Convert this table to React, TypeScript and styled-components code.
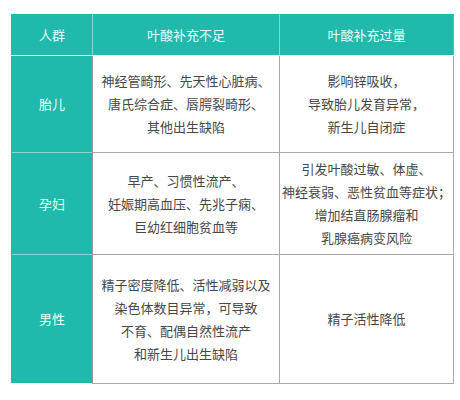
import React from 'react';
import styled, { createGlobalStyle } from 'styled-components';

const GlobalStyle = createGlobalStyle`
  body {
    margin: 0;
    background: #ffffff;
    font-family: 'Noto Sans CJK SC', 'Noto Sans', sans-serif;
  }
`;

const TEAL = '#1fbaac';

const Page = styled.div`
  padding: 14px 7px 0 11px;
`;

const Table = styled.table`
  width: 442px;
  table-layout: fixed;
  border-collapse: collapse;
  font-size: 13px;
  line-height: 23px;
`;

interface ColProps {
  w: number;
}
const Col = styled.col<ColProps>`
  width: ${({ w }) => w}px;
`;

interface RowProps {
  h: number;
}
const Row = styled.tr<RowProps>`
  height: ${({ h }) => h}px;
`;

const HeadCell = styled.th`
  background: ${TEAL};
  color: #eafffb;
  font-weight: 400;
  text-align: center;
  padding: 0;
  border-left: 1px solid #7fd9d0;
  border-bottom: 1px solid #e8f7f5;
  &:first-child {
    border-left: 1px solid ${TEAL};
  }
  &:last-child {
    border-right: 1px solid #9a9a9a;
  }
`;

const LabelCell = styled.th`
  background: ${TEAL};
  color: #eafffb;
  font-weight: 400;
  text-align: center;
  padding: 0;
  border-top: 1px solid #8ad9d1;
  border-left: 1px solid ${TEAL};
  border-right: 1px solid #9a9a9a;
`;

const BodyCell = styled.td`
  color: #474747;
  text-align: center;
  vertical-align: middle;
  padding: 0 2px;
  border: 1px solid #a8a8a8;
  white-space: nowrap;
`;

interface Entry {
  who: string;
  lack: string[];
  over: string[];
  h: number;
}

const rows: Entry[] = [
  {
    who: '胎儿',
    lack: ['神经管畸形、先天性心脏病、', '唐氏综合症、唇腭裂畸形、', '其他出生缺陷'],
    over: ['影响锌吸收，', '导致胎儿发育异常，', '新生儿自闭症'],
    h: 97
  },
  {
    who: '孕妇',
    lack: ['早产、习惯性流产、', '妊娠期高血压、先兆子痫、', '巨幼红细胞贫血等'],
    over: ['引发叶酸过敏、体虚、', '神经衰弱、恶性贫血等症状；', '增加结直肠腺瘤和', '乳腺癌病变风险'],
    h: 102
  },
  {
    who: '男性',
    lack: ['精子密度降低、活性减弱以及', '染色体数目异常，可导致', '不育、配偶自然性流产', '和新生儿出生缺陷'],
    over: ['精子活性降低'],
    h: 129
  }
];

const Lines: React.FC<{ items: string[] }> = ({ items }) => (
  <>
    {items.map((t, i) => (
      <div key={i}>{t}</div>
    ))}
  </>
);

const App: React.FC = () => (
  <Page>
    <GlobalStyle />
    <Table>
      <colgroup>
        <Col w={81} />
        <Col w={187} />
        <Col w={174} />
      </colgroup>
      <thead>
        <Row h={41}>
          <HeadCell>人群</HeadCell>
          <HeadCell>叶酸补充不足</HeadCell>
          <HeadCell>叶酸补充过量</HeadCell>
        </Row>
      </thead>
      <tbody>
        {rows.map((r) => (
          <Row h={r.h} key={r.who}>
            <LabelCell>{r.who}</LabelCell>
            <BodyCell>
              <Lines items={r.lack} />
            </BodyCell>
            <BodyCell>
              <Lines items={r.over} />
            </BodyCell>
          </Row>
        ))}
      </tbody>
    </Table>
  </Page>
);

export default App;
